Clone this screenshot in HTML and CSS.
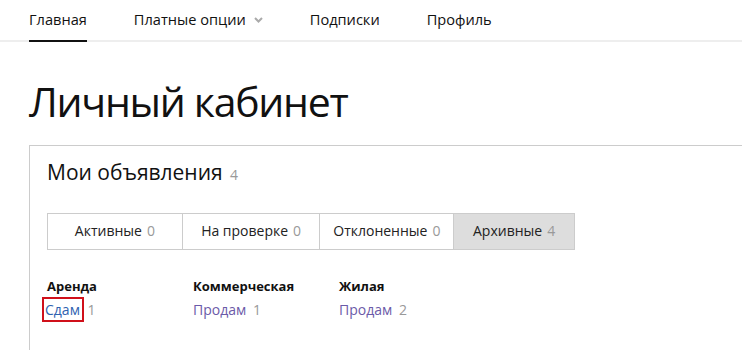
FILE: index.html
```html
<!DOCTYPE html>
<html lang="ru">
<head>
<meta charset="utf-8">
<link rel="stylesheet" href="styles.css">
</head>
<body>
<nav class="topnav">
  <a class="nav-item active" href="#">Главная</a>
  <a class="nav-item" href="#">Платные опции <svg class="chev" width="9" height="6" viewBox="0 0 9 6"><path d="M1 1l3.5 3.5L8 1" fill="none" stroke="#aaa" stroke-width="2"/></svg></a>
  <a class="nav-item" href="#">Подписки</a>
  <a class="nav-item" href="#">Профиль</a>
</nav>
<main class="page">
  <h1 class="title">Личный кабинет</h1>
  <section class="card">
    <h2 class="card-title">Мои объявления <span class="count">4</span></h2>
    <div class="tabs">
      <a class="tab t1" href="#">Активные <span class="count">0</span></a>
      <a class="tab t2" href="#">На проверке <span class="count">0</span></a>
      <a class="tab t3" href="#">Отклоненные <span class="count">0</span></a>
      <a class="tab t4 selected" href="#">Архивные <span class="count">4</span></a>
    </div>
    <div class="cats">
      <div class="cat">
        <div class="cat-name">Аренда</div>
        <div class="cat-row"><a class="link highlight" href="#">Сдам</a> <span class="count">1</span></div>
      </div>
      <div class="cat">
        <div class="cat-name">Коммерческая</div>
        <div class="cat-row"><a class="link visited" href="#">Продам</a> <span class="count">1</span></div>
      </div>
      <div class="cat">
        <div class="cat-name">Жилая</div>
        <div class="cat-row"><a class="link visited" href="#">Продам</a> <span class="count">2</span></div>
      </div>
    </div>
  </section>
</main>
</body>
</html>
```
FILE: styles.css
```css
* { box-sizing: border-box; }
html, body { margin: 0; padding: 0; background: #fff; }
body {
  font-family: "Open Sans", "Noto Sans", sans-serif;
  color: #111;
  width: 742px;
  height: 350px;
  overflow: hidden;
}
a { text-decoration: none; color: inherit; }

.topnav {
  display: flex;
  gap: 47px;
  padding-left: 29px;
  height: 42px;
  border-bottom: 2px solid #eee;
}
.nav-item {
  display: flex;
  align-items: center;
  gap: 8px;
  font-size: 14.6px;
  color: #111;
  height: 42px;
  padding-bottom: 2px;
  border-bottom: 2px solid transparent;
}
.nav-item.active { border-bottom-color: #111; }
.chev { margin-top: 1px; }

.page { padding-left: 29px; }
.title {
  margin: 0;
  padding-top: 31px;
  font-weight: 400;
  font-size: 41px;
  line-height: 56px;
  height: 103px;
  letter-spacing: -1.3px;
}
.card {
  border: 1px solid #ccc;
  border-right: none;
  padding: 11px 0 30px 17px;
  height: 220px;
}
.card-title {
  margin: 0;
  font-weight: 400;
  font-size: 21px;
  line-height: 30px;
}
.card-title .count { font-size: 14px; margin-left: 2px; }
.count { color: #999; }

.tabs {
  display: flex;
  margin-top: 23px;
  height: 37px;
  width: 528px;
  border: 1px solid #ccc;
}
.tab {
  display: flex;
  align-items: center;
  justify-content: center;
  font-size: 14px;
  color: #222;
  border-right: 1px solid #ccc;
  padding-bottom: 2px;
}
.tab .count { margin-left: 5px; }
.t1 { width: 135px; }
.t2 { width: 138px; }
.t3 { width: 134px; }
.t4 { width: 120px; border-right: none; }
.tab.selected { background: #ddd; }

.cats {
  display: flex;
  margin-top: 27px;
}
.cat { width: 146px; }
.cat-name {
  font-weight: 700;
  font-size: 13px;
  line-height: 18px;
  color: #111;
}
.cat-row {
  font-size: 14px;
  line-height: 20px;
  margin-top: 5px;
}
.cat-row .count { margin-left: 3px; }
.link { color: #2f62b0; }
.link.visited { color: #6b5aa8; }
.highlight {
  outline: 2px solid #d0101a;
  outline-offset: 1px;
  padding: 0 1px 0 0;
  margin-left: -2px;
}
```
